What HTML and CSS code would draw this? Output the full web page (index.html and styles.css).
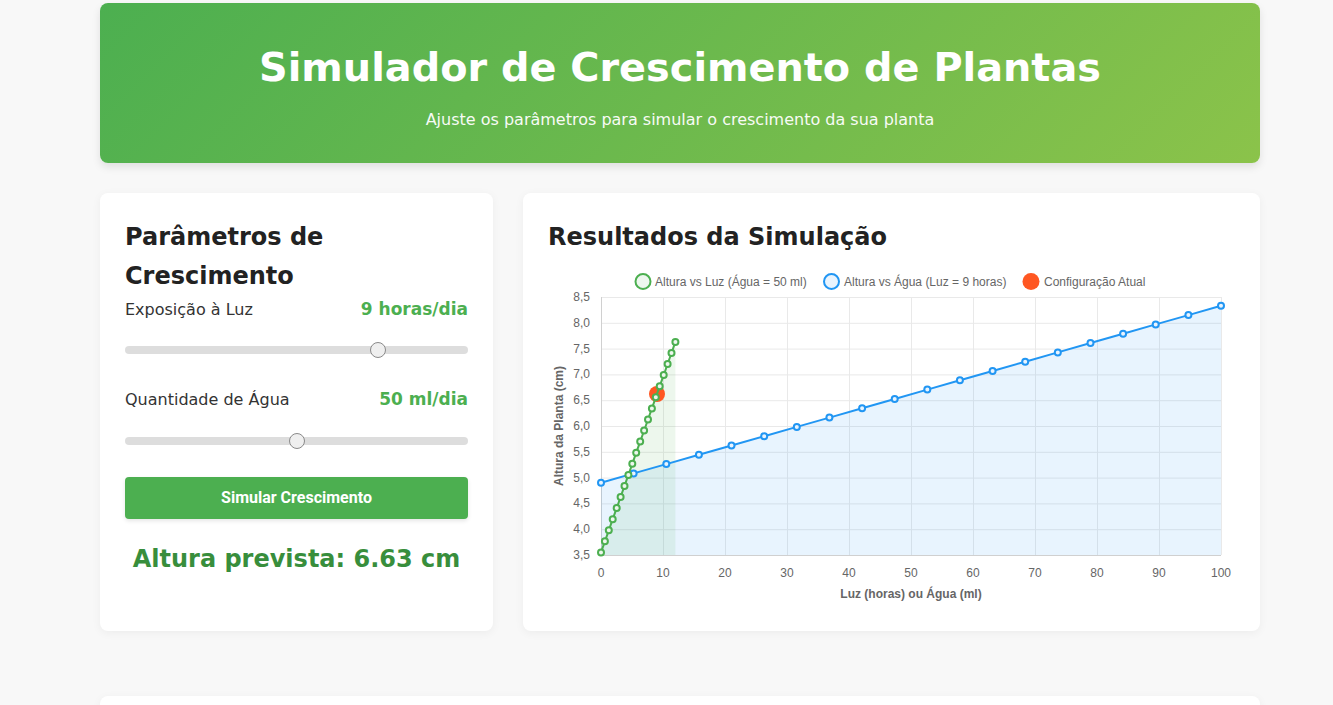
FILE: index.html
```html
<!DOCTYPE html>
<html lang="pt">
<head>
<meta charset="utf-8">
<title>Simulador de Crescimento de Plantas</title>
<link rel="stylesheet" href="styles.css">
</head>
<body>
<div class="container">
  <header class="hero">
    <h1 class="hero-title">Simulador de Crescimento de Plantas</h1>
    <p class="hero-sub">Ajuste os parâmetros para simular o crescimento da sua planta</p>
  </header>

  <div class="main">
    <section class="card controls">
      <h2 class="card-title">Parâmetros de Crescimento</h2>
      <div class="control-group">
        <div class="control-label">
          <span>Exposição à Luz</span>
          <span class="control-value">9 horas/dia</span>
        </div>
        <input class="range" type="range" min="0" max="12" value="9">
      </div>
      <div class="control-group">
        <div class="control-label">
          <span>Quantidade de Água</span>
          <span class="control-value">50 ml/dia</span>
        </div>
        <input class="range" type="range" min="0" max="100" value="50">
      </div>
      <button class="btn" type="button">Simular Crescimento</button>
      <div class="result">Altura prevista: 6.63 cm</div>
    </section>

    <section class="card results">
      <h2 class="card-title">Resultados da Simulação</h2>
      <svg class="chart" width="687" height="350" viewBox="0 0 687 350">
        <!-- legend -->
        <g class="legend">
          <circle cx="95" cy="25.5" r="7.5" fill="#edf7ee" stroke="#4CAF50" stroke-width="2"/>
          <text x="107" y="29.5">Altura vs Luz (Água = 50 ml)</text>
          <circle cx="283.5" cy="25.5" r="7.5" fill="#e9f4fe" stroke="#2196F3" stroke-width="2"/>
          <text x="296" y="29.5">Altura vs Água (Luz = 9 horas)</text>
          <circle cx="483" cy="25.5" r="8.5" fill="#FF5722"/>
          <text x="496" y="29.5">Configuração Atual</text>
        </g>
        <!-- grid -->
        <g stroke="#e9e9e9" stroke-width="1">
          <line x1="53" y1="41.5" x2="673" y2="41.5"/>
          <line x1="53" y1="67.3" x2="673" y2="67.3"/>
          <line x1="53" y1="93.1" x2="673" y2="93.1"/>
          <line x1="53" y1="118.9" x2="673" y2="118.9"/>
          <line x1="53" y1="144.7" x2="673" y2="144.7"/>
          <line x1="53" y1="170.5" x2="673" y2="170.5"/>
          <line x1="53" y1="196.3" x2="673" y2="196.3"/>
          <line x1="53" y1="222.1" x2="673" y2="222.1"/>
          <line x1="53" y1="247.9" x2="673" y2="247.9"/>
          <line x1="53" y1="273.7" x2="673" y2="273.7"/>
          <line x1="115.5" y1="41" x2="115.5" y2="299"/>
          <line x1="177.5" y1="41" x2="177.5" y2="299"/>
          <line x1="239.5" y1="41" x2="239.5" y2="299"/>
          <line x1="301.5" y1="41" x2="301.5" y2="299"/>
          <line x1="363.5" y1="41" x2="363.5" y2="299"/>
          <line x1="425.5" y1="41" x2="425.5" y2="299"/>
          <line x1="487.5" y1="41" x2="487.5" y2="299"/>
          <line x1="549.5" y1="41" x2="549.5" y2="299"/>
          <line x1="611.5" y1="41" x2="611.5" y2="299"/>
          <line x1="673.5" y1="41" x2="673.5" y2="299"/>
        </g>
        <g stroke="#d0d0d0" stroke-width="1">
          <line x1="53.5" y1="41" x2="53.5" y2="299.5"/>
          <line x1="53" y1="299.5" x2="673" y2="299.5"/>
        </g>
        <!-- y ticks -->
        <g class="tick tick-y">
          <text x="42" y="45">8,5</text>
          <text x="42" y="70.8">8,0</text>
          <text x="42" y="96.6">7,5</text>
          <text x="42" y="122.4">7,0</text>
          <text x="42" y="148.2">6,5</text>
          <text x="42" y="174">6,0</text>
          <text x="42" y="199.8">5,5</text>
          <text x="42" y="225.6">5,0</text>
          <text x="42" y="251.4">4,5</text>
          <text x="42" y="277.2">4,0</text>
          <text x="42" y="303">3,5</text>
        </g>
        <!-- x ticks -->
        <g class="tick tick-x">
          <text x="53" y="321">0</text>
          <text x="115" y="321">10</text>
          <text x="177" y="321">20</text>
          <text x="239" y="321">30</text>
          <text x="301" y="321">40</text>
          <text x="363" y="321">50</text>
          <text x="425" y="321">60</text>
          <text x="487" y="321">70</text>
          <text x="549" y="321">80</text>
          <text x="611" y="321">90</text>
          <text x="673" y="321">100</text>
        </g>
        <text class="axis-title" x="363" y="342">Luz (horas) ou Água (ml)</text>
        <text class="axis-title" x="0" y="0" transform="translate(15 170) rotate(-90)">Altura da Planta (cm)</text>

        <!-- fills -->
        <polygon fill="rgba(33,150,243,0.1)" points="53,226.8 85.6,217.4 118.3,208.1 150.9,198.8 183.5,189.5 216.2,180.2 248.8,170.9 281.4,161.6 314.1,152.3 346.7,143 379.3,133.6 411.9,124.3 444.6,115 477.2,105.7 509.8,96.4 542.5,87 575.1,77.7 607.7,68.4 640.4,59.1 673,49.8 673,299 53,299"/>
        <polygon fill="rgba(76,175,80,0.1)" points="53,296.4 56.9,285.3 60.8,274.3 64.7,263.2 68.7,252.1 72.6,241 76.5,229.9 80.4,218.9 84.3,207.8 88.2,196.7 92.2,185.6 96.1,174.5 100,163.5 103.9,152.4 107.8,141.3 111.7,130.2 115.7,119.1 119.6,108 123.5,97 127.4,85.9 127.4,299 53,299"/>

        <!-- current config -->
        <circle cx="109" cy="138" r="8" fill="#FF5722"/>

        <!-- water series -->
        <polyline fill="none" stroke="#2196F3" stroke-width="2" points="53,226.8 85.6,217.4 118.3,208.1 150.9,198.8 183.5,189.5 216.2,180.2 248.8,170.9 281.4,161.6 314.1,152.3 346.7,143 379.3,133.6 411.9,124.3 444.6,115 477.2,105.7 509.8,96.4 542.5,87 575.1,77.7 607.7,68.4 640.4,59.1 673,49.8"/>
        <g fill="#e9f4fe" stroke="#2196F3" stroke-width="2">
          <circle cx="53" cy="226.8" r="3"/><circle cx="85.6" cy="217.4" r="3"/><circle cx="118.3" cy="208.1" r="3"/><circle cx="150.9" cy="198.8" r="3"/><circle cx="183.5" cy="189.5" r="3"/><circle cx="216.2" cy="180.2" r="3"/><circle cx="248.8" cy="170.9" r="3"/><circle cx="281.4" cy="161.6" r="3"/><circle cx="314.1" cy="152.3" r="3"/><circle cx="346.7" cy="143" r="3"/><circle cx="379.3" cy="133.6" r="3"/><circle cx="411.9" cy="124.3" r="3"/><circle cx="444.6" cy="115" r="3"/><circle cx="477.2" cy="105.7" r="3"/><circle cx="509.8" cy="96.4" r="3"/><circle cx="542.5" cy="87" r="3"/><circle cx="575.1" cy="77.7" r="3"/><circle cx="607.7" cy="68.4" r="3"/><circle cx="640.4" cy="59.1" r="3"/><circle cx="673" cy="49.8" r="3"/>
        </g>

        <!-- light series -->
        <polyline fill="none" stroke="#4CAF50" stroke-width="2" points="53,296.4 56.9,285.3 60.8,274.3 64.7,263.2 68.7,252.1 72.6,241 76.5,229.9 80.4,218.9 84.3,207.8 88.2,196.7 92.2,185.6 96.1,174.5 100,163.5 103.9,152.4 107.8,141.3 111.7,130.2 115.7,119.1 119.6,108 123.5,97 127.4,85.9"/>
        <g fill="#edf7ee" stroke="#4CAF50" stroke-width="2">
          <circle cx="53" cy="296.4" r="3"/><circle cx="56.9" cy="285.3" r="3"/><circle cx="60.8" cy="274.3" r="3"/><circle cx="64.7" cy="263.2" r="3"/><circle cx="68.7" cy="252.1" r="3"/><circle cx="72.6" cy="241" r="3"/><circle cx="76.5" cy="229.9" r="3"/><circle cx="80.4" cy="218.9" r="3"/><circle cx="84.3" cy="207.8" r="3"/><circle cx="88.2" cy="196.7" r="3"/><circle cx="92.2" cy="185.6" r="3"/><circle cx="96.1" cy="174.5" r="3"/><circle cx="100" cy="163.5" r="3"/><circle cx="103.9" cy="152.4" r="3"/><circle cx="107.8" cy="141.3" r="3"/><circle cx="111.7" cy="130.2" r="3"/><circle cx="115.7" cy="119.1" r="3"/><circle cx="119.6" cy="108" r="3"/><circle cx="123.5" cy="97" r="3"/><circle cx="127.4" cy="85.9" r="3"/>
        </g>
      </svg>
    </section>
  </div>

  <section class="card lower"></section>
</div>
</body>
</html>
```

FILE: styles.css
```css
* { box-sizing: border-box; }

html, body {
  margin: 0;
  padding: 0;
}

body {
  background: #f8f8f8;
  color: #333;
  font-family: "DejaVu Sans", Verdana, sans-serif;
  font-size: 16px;
  line-height: 1.6;
}

.container {
  width: 1160px;
  margin: 0 0 0 100px;
  padding-top: 3px;
}

.hero {
  background: linear-gradient(135deg, #4CAF50 0%, #8BC34A 100%);
  color: #fff;
  border-radius: 8px;
  padding: 40px 20px 30px;
  text-align: center;
  box-shadow: 0 4px 8px rgba(0, 0, 0, 0.1);
}

.hero-title {
  margin: 0 0 17px;
  font-size: 39.8px;
  line-height: 48px;
  font-weight: bold;
}

.hero-sub {
  margin: 0;
  font-size: 16px;
  line-height: 24.6px;
  opacity: 0.95;
}

.main {
  display: grid;
  grid-template-columns: 393px 1fr;
  gap: 30px;
  margin-top: 30px;
}

.card {
  background: #fff;
  border-radius: 8px;
  padding: 25px;
  box-shadow: 0 2px 10px rgba(0, 0, 0, 0.05);
}

.card-title {
  margin: 0;
  font-size: 24px;
  line-height: 39px;
  font-weight: bold;
  color: #222;
}

.results .card-title {
  line-height: 38.4px;
}

.control-group {
  margin-bottom: 32px;
}

.control-label {
  display: flex;
  justify-content: space-between;
  align-items: baseline;
  height: 25.6px;
  margin-bottom: 25px;
}

.control-value {
  color: #4CAF50;
  font-weight: bold;
  font-size: 17px;
}

.range {
  -webkit-appearance: none;
  appearance: none;
  display: block;
  width: 100%;
  height: 8px;
  margin: 0;
  background: #ddd;
  border-radius: 4px;
  outline: none;
}

.range::-webkit-slider-thumb {
  -webkit-appearance: none;
  appearance: none;
  width: 16px;
  height: 16px;
  border-radius: 50%;
  background: #efefef;
  border: 1px solid #8a8a8a;
}

.btn {
  display: block;
  width: 100%;
  height: 42px;
  border: none;
  border-radius: 4px;
  background: #4CAF50;
  color: #fff;
  font-family: Roboto, "Noto Sans", sans-serif;
  font-size: 16px;
  font-weight: 700;
  box-shadow: 0 2px 4px rgba(0, 0, 0, 0.1);
  cursor: pointer;
}

.result {
  margin-top: 21px;
  text-align: center;
  font-size: 24px;
  font-weight: bold;
  color: #388E3C;
}

.chart {
  display: block;
  font-family: "Liberation Sans", Arial, sans-serif;
}

.legend text {
  font-size: 12px;
  fill: #666;
}

.tick text {
  font-size: 12px;
  fill: #666;
}

.tick-y text {
  text-anchor: end;
}

.tick-x text {
  text-anchor: middle;
}

.axis-title {
  font-size: 12px;
  font-weight: bold;
  fill: #666;
  text-anchor: middle;
}

.lower {
  margin-top: 65px;
  height: 200px;
}
```
